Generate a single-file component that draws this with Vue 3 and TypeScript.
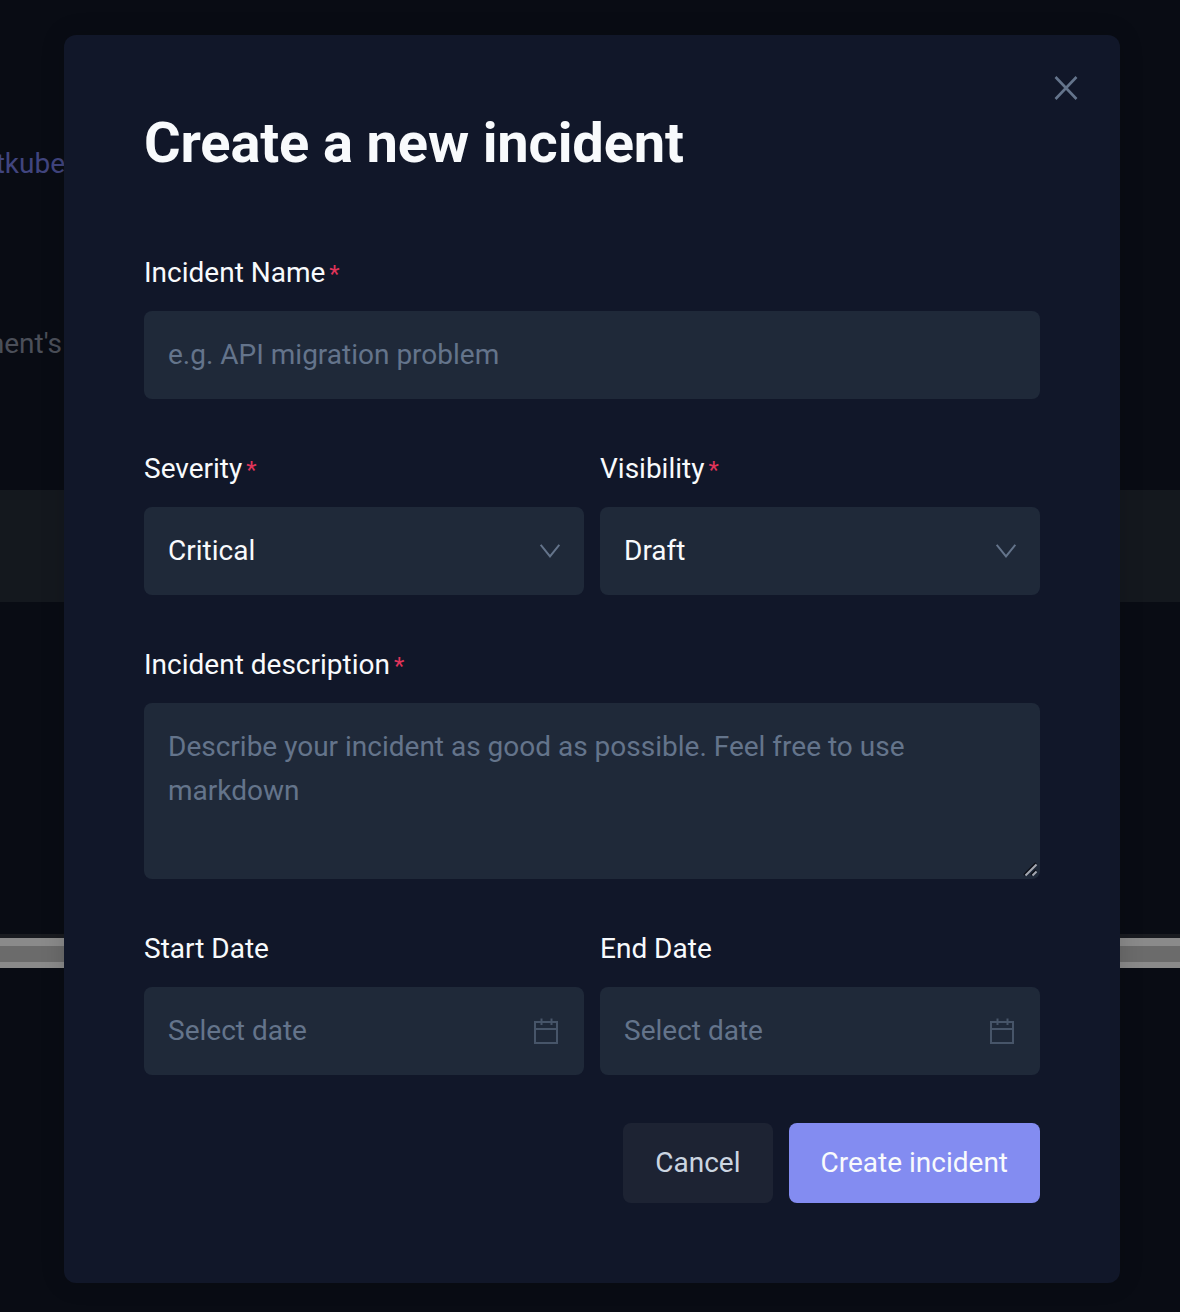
<script setup lang="ts">
interface Option { label: string; value: string }
const severities: Option[] = [{ label: 'Critical', value: 'critical' }]
const visibilities: Option[] = [{ label: 'Draft', value: 'draft' }]
</script>

<template>
  <div class="page">
    <div class="backdrop">
      <div class="word word-link">tkube</div>
      <div class="word word-muted">ment's</div>
      <div class="band"></div>
      <div class="stripe">
        <div class="stripe-edge"></div>
        <div class="stripe-light top"></div>
        <div class="stripe-mid"></div>
        <div class="stripe-light bottom"></div>
      </div>
    </div>

    <section class="modal">
      <button class="close" type="button" aria-label="Close">
        <svg width="24" height="24" viewBox="0 0 24 24" fill="none" stroke="currentColor" stroke-width="2.6">
          <path d="M1.5 1 L22.5 23 M22.5 1 L1.5 23" />
        </svg>
      </button>

      <h1 class="title">Create a new incident</h1>

      <form class="form" @submit.prevent>
        <div class="field">
          <label class="label">Incident Name<span class="req">*</span></label>
          <input class="control single" type="text" placeholder="e.g. API migration problem" />
        </div>

        <div class="row">
          <div class="field">
            <label class="label">Severity<span class="req">*</span></label>
            <div class="wrap">
              <select class="control select">
                <option v-for="o in severities" :key="o.value" :value="o.value">{{ o.label }}</option>
              </select>
              <svg class="chevron" width="20" height="14" viewBox="0 0 20 14" fill="none" stroke="currentColor" stroke-width="2">
                <path d="M0.7 0.8 L10 12.4 L19.3 0.8" />
              </svg>
            </div>
          </div>
          <div class="field">
            <label class="label">Visibility<span class="req">*</span></label>
            <div class="wrap">
              <select class="control select">
                <option v-for="o in visibilities" :key="o.value" :value="o.value">{{ o.label }}</option>
              </select>
              <svg class="chevron" width="20" height="14" viewBox="0 0 20 14" fill="none" stroke="currentColor" stroke-width="2">
                <path d="M0.7 0.8 L10 12.4 L19.3 0.8" />
              </svg>
            </div>
          </div>
        </div>

        <div class="field">
          <label class="label">Incident description<span class="req">*</span></label>
          <div class="wrap">
            <textarea class="control area" placeholder="Describe your incident as good as possible. Feel free to use markdown"></textarea>
            <svg class="grip" width="16" height="16" viewBox="0 0 16 16" fill="none" stroke-width="2">
              <path d="M2 14 L14 2 M9 14 L14 9" stroke="#0b0e16" />
              <path d="M3.5 14.5 L14.5 3.5 M10.5 14.5 L14.5 10.5" stroke="#a3a7b0" />
            </svg>
          </div>
        </div>

        <div class="row">
          <div class="field" v-for="name in ['Start Date', 'End Date']" :key="name">
            <label class="label">{{ name }}</label>
            <div class="wrap">
              <input class="control single" type="text" placeholder="Select date" />
              <svg class="calendar" width="26" height="26" viewBox="0 0 26 26" fill="none" stroke="currentColor" stroke-width="2">
                <rect x="1" y="4" width="22" height="21" />
                <path d="M1 11 H23 M7.5 0.5 V7 M17.5 0.5 V7" />
              </svg>
            </div>
          </div>
        </div>

        <div class="actions">
          <button class="btn cancel" type="button">Cancel</button>
          <button class="btn primary" type="submit">Create incident</button>
        </div>
      </form>
    </section>
  </div>
</template>

<style>
html, body { margin: 0; background: #090c14; }
</style>

<style scoped>
.page {
  position: relative;
  width: 1180px;
  height: 1312px;
  overflow: hidden;
  background: #090c14;
  font-family: Roboto, "Liberation Sans", sans-serif;
}
.backdrop {
  display: flex;
  flex-direction: column;
  padding-top: 142px;
}
.word {
  display: flex;
  justify-content: flex-end;
  height: 44px;
  font-size: 28px;
  line-height: 44px;
  white-space: nowrap;
}
.word-link { width: 65px; color: #41457f; }
.word-muted { width: 62px; color: #4b4f59; margin-top: 136px; }
.band { height: 112px; margin-top: 124px; background: #14181e; }
.stripe { display: flex; flex-direction: column; margin-top: 332px; }
.stripe-edge { height: 4px; background: #191b20; }
.stripe-light { background: #8a8a8a; }
.stripe-light.top { height: 8px; }
.stripe-light.bottom { height: 6px; }
.stripe-mid { height: 16px; background: #6b6b6b; }

.modal {
  position: absolute;
  left: 64px;
  top: 35px;
  width: 1056px;
  height: 1248px;
  box-sizing: border-box;
  padding: 80px;
  background: #111729;
  border-radius: 12px;
  box-shadow: 0 0 24px rgba(0, 0, 0, 0.15);
}
.close {
  position: absolute;
  right: 42px;
  top: 41px;
  width: 24px;
  height: 24px;
  padding: 0;
  border: 0;
  background: none;
  color: #64748b;
  display: flex;
}
.title {
  margin: 0 0 80px;
  font-size: 56px;
  line-height: 56px;
  font-weight: 700;
  letter-spacing: -0.14px;
  color: #f8fafc;
}
.form { display: flex; flex-direction: column; gap: 48px; }
.row { display: grid; grid-template-columns: 1fr 1fr; gap: 16px; }
.field { display: flex; flex-direction: column; min-width: 0; }
.label {
  display: block;
  height: 44px;
  margin-bottom: 16px;
  font-size: 28px;
  line-height: 44px;
  font-weight: 400;
  color: #f8fafc;
}
.req { color: #e0345a; margin-left: 4px; font-size: 24px; }
.wrap { position: relative; }
.control {
  display: block;
  width: 100%;
  height: 88px;
  box-sizing: border-box;
  padding: 0 24px;
  border: 0;
  border-radius: 8px;
  outline: 0;
  background: #1f2939;
  color: #f8fafc;
  font: 400 28px/44px Roboto, "Liberation Sans", sans-serif;
}
.single { padding-bottom: 2px; }
.control::placeholder { color: #64748b; opacity: 1; }
.select { appearance: none; -webkit-appearance: none; }
.area { height: 176px; padding: 22px 24px; resize: none; }
.grip {
  position: absolute;
  right: 2px;
  bottom: 2px;
  pointer-events: none;
}
.chevron {
  position: absolute;
  right: 24px;
  top: 37px;
  color: #64748b;
  pointer-events: none;
}
.calendar {
  position: absolute;
  right: 24px;
  top: 31px;
  color: #475569;
  pointer-events: none;
}
.actions { display: flex; justify-content: flex-end; gap: 16px; }
.btn {
  height: 80px;
  padding: 0 32px;
  border: 0;
  border-radius: 8px;
  font: 400 28px/44px Roboto, "Liberation Sans", sans-serif;
}
.cancel { background: #1d2333; color: #cbd5e1; }
.primary { background: #838cf1; color: #f8fafc; }
</style>
